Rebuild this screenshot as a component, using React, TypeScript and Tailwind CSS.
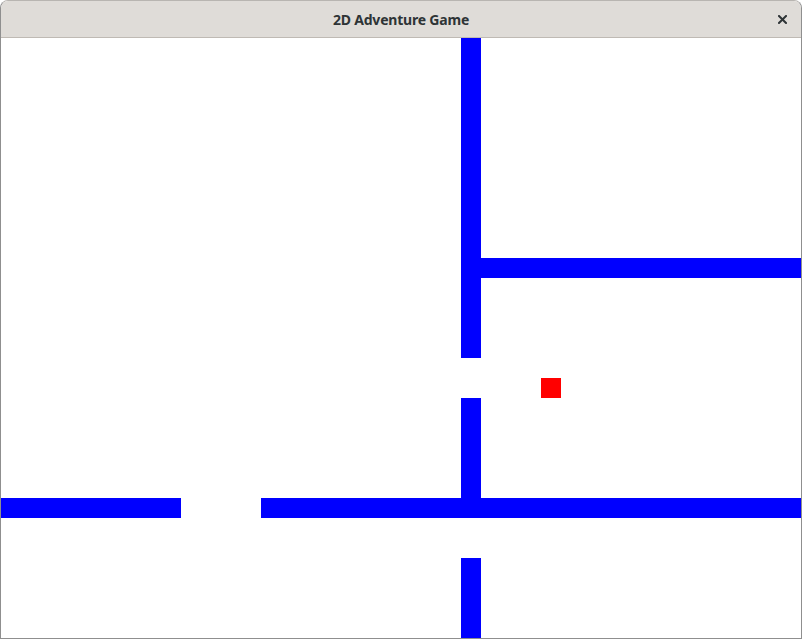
const walls = [
  { x: 460, y: 0, w: 20, h: 320 },
  { x: 480, y: 220, w: 320, h: 20 },
  { x: 460, y: 360, w: 20, h: 100 },
  { x: 0, y: 460, w: 180, h: 20 },
  { x: 260, y: 460, w: 540, h: 20 },
  { x: 460, y: 520, w: 20, h: 80 },
];

const player = { x: 540, y: 340, size: 20 };

export default function App() {
  return (
    <div className="w-[802px] h-[639px] bg-white overflow-hidden">
      <div className="flex flex-col h-full rounded-t-[8px] border border-[#8f8f8f] border-t-[#b8b5b1] overflow-hidden">
        {/* title bar */}
        <div className="relative h-[37px] shrink-0 bg-[#dfdcd8] border-b border-[#bfbab4] flex items-center justify-center">
          <span className="text-[14px] font-bold text-[#2e3436] font-['Noto_Sans',sans-serif] tracking-[-0.2px]">
            2D Adventure Game
          </span>
          <svg
            className="absolute right-[14px] top-[14px]"
            width="9"
            height="9"
            viewBox="0 0 9 9"
            stroke="#2e3436"
            strokeWidth="2"
            strokeLinecap="square"
          >
            <path d="M1 1l7 7M8 1l-7 7" />
          </svg>
        </div>

        {/* game canvas */}
        <div className="relative flex-1 bg-white">
          {walls.map((w, i) => (
            <div
              key={i}
              className="absolute bg-[#0000ff]"
              style={{ left: w.x, top: w.y, width: w.w, height: w.h }}
            />
          ))}
          <div
            className="absolute bg-[#ff0000]"
            style={{ left: player.x, top: player.y, width: player.size, height: player.size }}
          />
        </div>
      </div>
    </div>
  );
}
